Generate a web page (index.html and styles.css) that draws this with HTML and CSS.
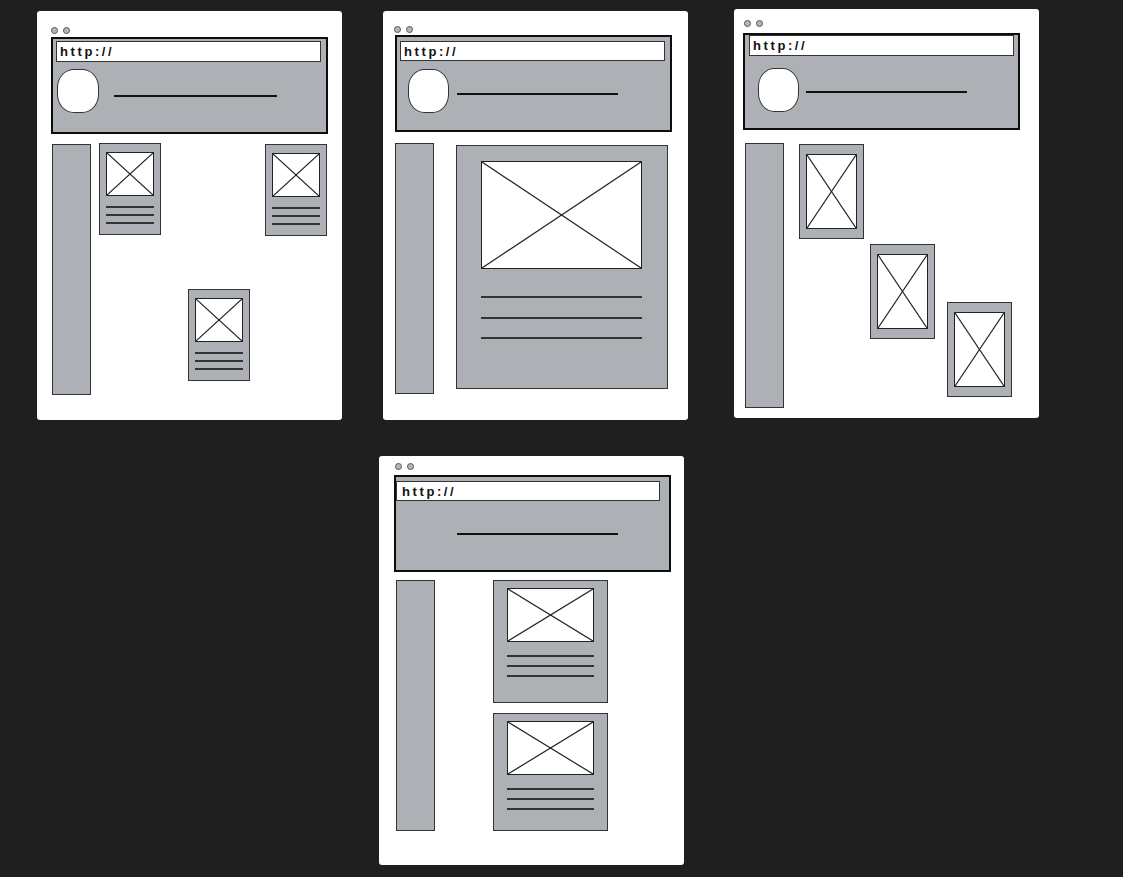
FILE: index.html
```html
<!DOCTYPE html>
<html lang="en">
<head>
    <meta charset="UTF-8">
    <meta name="viewport" content="width=device-width, initial-scale=1.0">
    <title>Layout Wireframes</title>
    <link rel="stylesheet" href="styles.css">
</head>
<body>
    <div class="board">

        <!-- Scattered cards -->
        <div class="window w1">
            <div class="dots"><span class="dot"></span><span class="dot"></span></div>
            <div class="header">
                <div class="url">http://</div>
                <div class="hero">
                    <div class="avatar"></div>
                    <div class="title"></div>
                </div>
            </div>
            <div class="body">
                <div class="sidebar"></div>
                <div class="scatter">
                    <div class="thumb a">
                        <div class="ph"><svg viewBox="0 0 100 100" preserveAspectRatio="none"><line x1="0" y1="0" x2="100" y2="100"/><line x1="0" y1="100" x2="100" y2="0"/></svg></div>
                        <div class="lines"><i></i><i></i><i></i></div>
                    </div>
                    <div class="thumb b">
                        <div class="ph"><svg viewBox="0 0 100 100" preserveAspectRatio="none"><line x1="0" y1="0" x2="100" y2="100"/><line x1="0" y1="100" x2="100" y2="0"/></svg></div>
                        <div class="lines"><i></i><i></i><i></i></div>
                    </div>
                    <div class="thumb c">
                        <div class="ph"><svg viewBox="0 0 100 100" preserveAspectRatio="none"><line x1="0" y1="0" x2="100" y2="100"/><line x1="0" y1="100" x2="100" y2="0"/></svg></div>
                        <div class="lines"><i></i><i></i><i></i></div>
                    </div>
                </div>
            </div>
        </div>

        <!-- Single big card -->
        <div class="window w2">
            <div class="dots"><span class="dot"></span><span class="dot"></span></div>
            <div class="header">
                <div class="url">http://</div>
                <div class="hero">
                    <div class="avatar"></div>
                    <div class="title"></div>
                </div>
            </div>
            <div class="body">
                <div class="sidebar"></div>
                <div class="thumb big">
                    <div class="ph"><svg viewBox="0 0 100 100" preserveAspectRatio="none"><line x1="0" y1="0" x2="100" y2="100"/><line x1="0" y1="100" x2="100" y2="0"/></svg></div>
                    <div class="lines"><i></i><i></i><i></i></div>
                </div>
            </div>
        </div>

        <!-- Staircase -->
        <div class="window w3">
            <div class="dots"><span class="dot"></span><span class="dot"></span></div>
            <div class="header">
                <div class="url">http://</div>
                <div class="hero">
                    <div class="avatar"></div>
                    <div class="title"></div>
                </div>
            </div>
            <div class="body">
                <div class="sidebar"></div>
                <div class="thumb s1">
                    <div class="ph"><svg viewBox="0 0 100 100" preserveAspectRatio="none"><line x1="0" y1="0" x2="100" y2="100"/><line x1="0" y1="100" x2="100" y2="0"/></svg></div>
                </div>
                <div class="thumb s2">
                    <div class="ph"><svg viewBox="0 0 100 100" preserveAspectRatio="none"><line x1="0" y1="0" x2="100" y2="100"/><line x1="0" y1="100" x2="100" y2="0"/></svg></div>
                </div>
                <div class="thumb s3">
                    <div class="ph"><svg viewBox="0 0 100 100" preserveAspectRatio="none"><line x1="0" y1="0" x2="100" y2="100"/><line x1="0" y1="100" x2="100" y2="0"/></svg></div>
                </div>
            </div>
        </div>

        <!-- Stacked column, no logo -->
        <div class="window w4">
            <div class="dots"><span class="dot"></span><span class="dot"></span></div>
            <div class="header">
                <div class="url">http://</div>
                <div class="hero">
                    <div class="title"></div>
                </div>
            </div>
            <div class="body">
                <div class="sidebar"></div>
                <div class="stack">
                    <div class="thumb tall">
                        <div class="ph"><svg viewBox="0 0 100 100" preserveAspectRatio="none"><line x1="0" y1="0" x2="100" y2="100"/><line x1="0" y1="100" x2="100" y2="0"/></svg></div>
                        <div class="lines"><i></i><i></i><i></i></div>
                    </div>
                    <div class="thumb short">
                        <div class="ph"><svg viewBox="0 0 100 100" preserveAspectRatio="none"><line x1="0" y1="0" x2="100" y2="100"/><line x1="0" y1="100" x2="100" y2="0"/></svg></div>
                        <div class="lines"><i></i><i></i><i></i></div>
                    </div>
                </div>
            </div>
        </div>

    </div>
</body>
</html>
```

FILE: styles.css
```css
body {
    margin: 0;
    background-color: #1f1f1f;
    font-family: "Liberation Sans", Arial, sans-serif;
}
.board {
    display: grid;
    grid-template-columns: 305px 305px 305px;
    column-gap: 41px;
    row-gap: 36px;
    padding: 11px 0 0 37px;
}
.window {
    width: 305px;
    height: 409px;
    background-color: #fff;
    border-radius: 3px;
    display: flex;
    flex-direction: column;
    box-sizing: border-box;
}
.w3 {
    margin: -2px 0 0 5px;
}
.w4 {
    grid-column: 2;
    margin-left: -4px;
}

/* browser chrome */
.dots {
    display: flex;
    gap: 5px;
}
.dot {
    width: 7px;
    height: 7px;
    border-radius: 50%;
    background-color: #b3b6ba;
    border: 1px solid #555;
    box-sizing: border-box;
}
.header {
    width: 277px;
    height: 97px;
    box-sizing: border-box;
    background-color: #adb0b4;
    border: 2px solid #0d0d0d;
}
.url {
    width: 265px;
    height: 21px;
    box-sizing: border-box;
    background-color: #fff;
    border: 1px solid #333;
    padding-left: 3px;
    font-size: 13px;
    font-weight: bold;
    letter-spacing: 2.6px;
    line-height: 20px;
    color: #111;
}
.hero {
    display: flex;
    align-items: flex-start;
}
.avatar {
    width: 42px;
    height: 44px;
    box-sizing: border-box;
    background-color: #fff;
    border: 1px solid #333;
    border-radius: 40% / 42%;
}
.title {
    width: 162px;
    height: 2px;
    background-color: #111;
}

/* page body */
.body {
    display: flex;
    align-items: flex-start;
}
.sidebar {
    width: 39px;
    height: 251px;
    box-sizing: border-box;
    background-color: #adb0b4;
    border: 1px solid #333;
}
.thumb {
    box-sizing: border-box;
    background-color: #adb0b4;
    border: 1px solid #333;
}
.ph {
    box-sizing: border-box;
    background-color: #fff;
    border: 1px solid #222;
}
.ph svg {
    display: block;
    width: 100%;
    height: 100%;
}
.ph line {
    stroke: #222;
    stroke-width: 1.2;
    vector-effect: non-scaling-stroke;
}
.lines {
    display: flex;
    flex-direction: column;
}
.lines i {
    display: block;
    height: 2px;
    background-color: #333;
}

/* window 1: scattered */
.w1 .dots { margin: 16px 0 0 14px; }
.w1 .header { margin: 3px 0 0 14px; }
.w1 .url { margin: 2px 0 0 3px; }
.w1 .hero { margin-top: 7px; padding-left: 4px; }
.w1 .title { margin: 26px 0 0 15px; width: 163px; }
.w1 .body { margin-top: 9px; }
.w1 .sidebar { margin: 1px 0 0 15px; }
.scatter {
    display: grid;
    grid-template-columns: 89px 77px 62px;
    grid-template-rows: 146px auto;
    margin-left: 8px;
}
.w1 .thumb {
    width: 62px;
    height: 92px;
    padding: 8px 6px 0;
}
.w1 .ph { height: 44px; }
.w1 .lines { margin-top: 10px; gap: 6px; }
.scatter .a { grid-row: 1; grid-column: 1; }
.scatter .b { grid-row: 1; grid-column: 3; margin-top: 1px; }
.scatter .c { grid-row: 2; grid-column: 2; }

/* window 2: single big card */
.w2 .dots { margin: 15px 0 0 11px; }
.w2 .header { margin: 2px 0 0 12px; }
.w2 .url { margin: 4px 0 0 3px; height: 20px; line-height: 19px; }
.w2 .hero { margin-top: 8px; padding-left: 11px; }
.w2 .avatar { width: 41px; }
.w2 .title { margin: 24px 0 0 8px; width: 161px; }
.w2 .body { margin-top: 11px; }
.w2 .sidebar { margin-left: 12px; }
.big {
    width: 212px;
    height: 244px;
    margin: 2px 0 0 22px;
    padding: 15px 25px 0 24px;
}
.big .ph { height: 108px; }
.big .lines { margin-top: 27px; gap: 18.5px; }

/* window 3: staircase */
.w3 .dots { margin: 11px 0 0 10px; }
.w3 .header { margin: 6px 0 0 9px; }
.w3 .url { margin: 0 0 0 4px; }
.w3 .hero { margin-top: 12px; padding-left: 13px; }
.w3 .avatar { width: 41px; }
.w3 .title { margin: 23px 0 0 7px; width: 161px; }
.w3 .body { margin-top: 13px; }
.w3 .sidebar { margin-left: 11px; height: 265px; }
.w3 .thumb {
    width: 65px;
    height: 95px;
    padding: 9px 6px;
}
.w3 .ph { height: 100%; }
.s1 { margin: 1px 0 0 15px; }
.s2 { margin: 101px 0 0 6px; }
.s3 { margin: 159px 0 0 12px; }

/* window 4: stacked column */
.w4 .dots { margin: 7px 0 0 16px; }
.w4 .header { margin: 5px 0 0 15px; }
.w4 .url { margin: 4px 0 0 0; width: 264px; height: 20px; line-height: 19px; padding-left: 5px; }
.w4 .title { margin: 32px 0 0 61px; width: 161px; }
.w4 .body { margin-top: 8px; }
.w4 .sidebar { margin-left: 17px; }
.stack {
    display: flex;
    flex-direction: column;
    gap: 10px;
    margin-left: 58px;
}
.stack .thumb {
    width: 115px;
    padding: 7px 13px 0;
}
.stack .ph { height: 54px; }
.stack .lines { margin-top: 13px; gap: 8px; }
.tall { height: 123px; }
.short { height: 118px; }
```
